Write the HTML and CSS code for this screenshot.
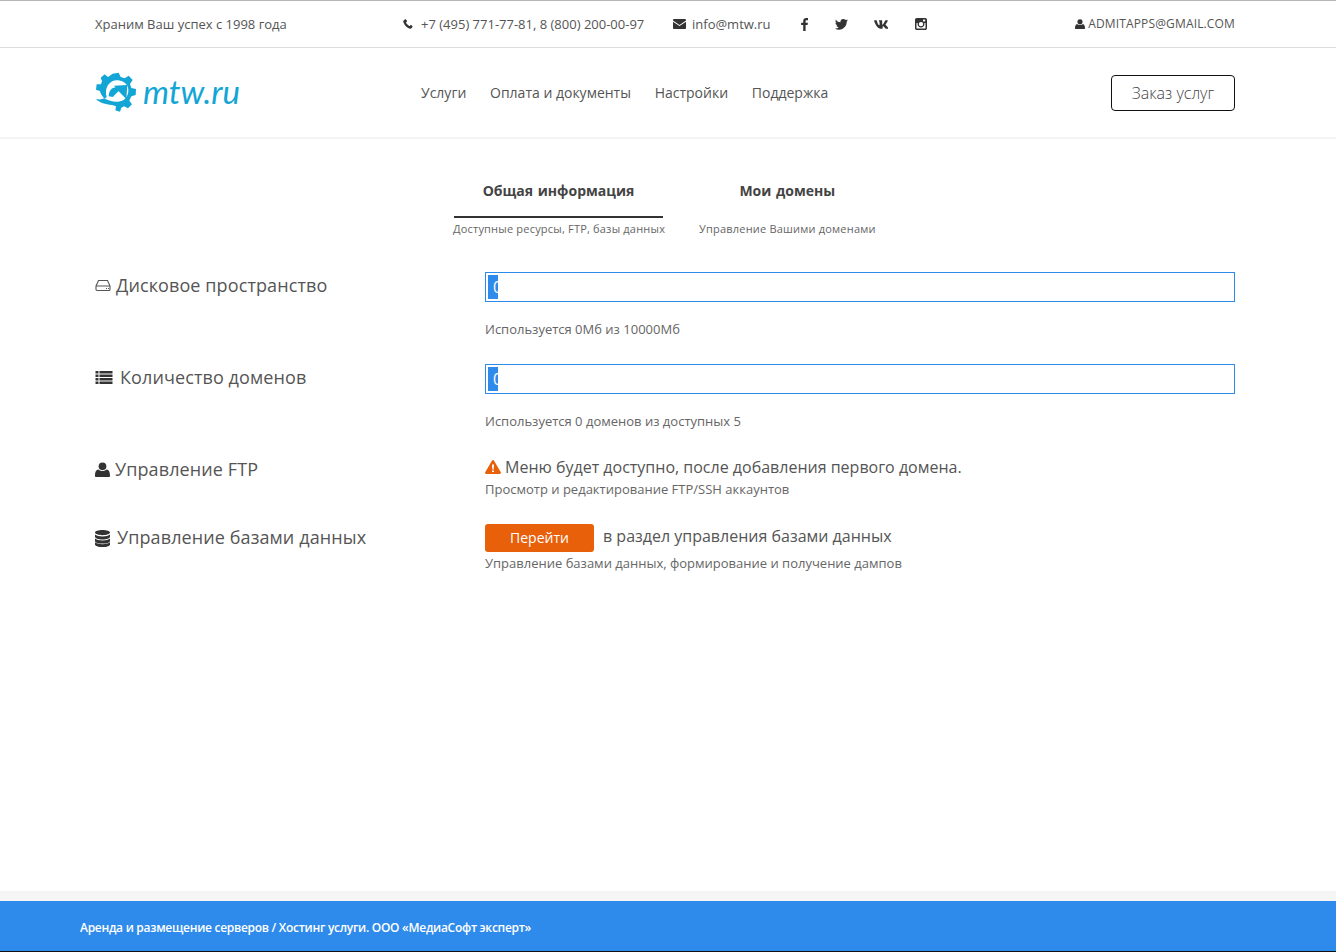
FILE: index.html
```html
<!DOCTYPE html>
<html lang="ru">
<head>
<meta charset="utf-8">
<title>mtw.ru</title>
<link rel="stylesheet" href="styles.css">
</head>
<body>
<svg class="defs" width="0" height="0" aria-hidden="true">
  <symbol id="i-user" viewBox="0 0 14 14"><circle cx="7" cy="4" r="3.6"/><path d="M0.6 13.900c-.5 0-.6-.5-.6-1 0-3 .8-5.600 3-5.900.9.8 2.400 1.500 4 1.500s3.100-.7 4-1.500c2.200.3 3 2.900 3 5.900 0 .5-.1 1-.6 1z"/></symbol>
</svg>

<div class="topbar">
  <div class="wrap topbar-row">
    <span class="slogan">Храним Ваш успех с 1998 года</span>
    <span class="contact phone">
      <svg class="ic-phone" viewBox="0 0 12 12"><path d="M2.700.4 1 1.600C.3 2.200.2 3.300.7 4.600c1.200 3 3.700 5.600 6.800 6.800 1.200.4 2.200.3 2.900-.5l1.100-1.500c.2-.3.1-.6-.1-.8L9.900 7.300c-.3-.2-.6-.2-.8 0l-.9 1c-.2.2-.5.2-.7.1C6 7.700 4.400 6.100 3.700 4.600c-.1-.3-.1-.5.1-.7l.9-.9c.2-.2.3-.5.1-.8L3.500.5C3.300.2 3 .2 2.700.4z"/></svg>
      +7 (495) 771-77-81, 8 (800) 200-00-97
    </span>
    <span class="contact mail">
      <svg class="ic-mail" viewBox="0 0 13 10"><path d="M.9 0h11.200c.5 0 .9.4.9.9 0 .5-.3.9-.7 1.200L6.500 5.900.7 2.100C.3 1.800 0 1.400 0 .9 0 .4.4 0 .9 0zM0 2.800l6.500 4.300L13 2.800V9c0 .6-.4 1-1 1H1c-.6 0-1-.4-1-1z"/></svg>
      info@mtw.ru
    </span>
    <span class="socials">
      <svg class="soc soc-f" viewBox="0 0 7 13"><path d="M4.600 13V7.100h2l.3-2.300H4.600V3.300c0-.7.2-1.100 1.100-1.100H7V.1C6.700.1 6 0 5.200 0 3.400 0 2.200 1.100 2.200 3.100v1.700H.1v2.300h2.100V13z"/></svg>
      <svg class="soc soc-t" viewBox="0 0 13 11"><path d="M13 1.300c-.5.2-1 .4-1.500.4.5-.3 1-.8 1.200-1.400-.5.3-1.100.5-1.700.7C9.500.4 8.800 0 8.100 0 6.600 0 5.400 1.200 5.400 2.700c0 .2 0 .4.1.6C3.300 3.200 1.300 2.100.9.500.7 1 .5 1.400.5 1.900c0 .9.5 1.700 1.200 2.200-.4 0-.9-.1-1.200-.3v0c0 1.300.9 2.400 2.100 2.600-.2.1-.5.1-.7.1h-.5c.3 1.100 1.300 1.800 2.500 1.900C2.900 9.100 1.700 9.500.6 9.500H0c1.200.8 2.600 1.200 4.100 1.200 4.900 0 7.600-4.100 7.600-7.600v-.4c.5-.4 1-.9 1.300-1.400z"/></svg>
      <svg class="soc soc-v" viewBox="0 0 16 9"><path d="M15.700.7c.1-.4 0-.7-.5-.7h-1.700c-.4 0-.6.2-.7.5-.5 1.200-1.500 3-2.300 3.900-.2.2-.4.3-.5.3-.1 0-.2-.1-.2-.4V.6c0-.4-.1-.6-.4-.6H6.700c-.2 0-.4.2-.4.4 0 .4.6.5.7 1.700v2.600c0 .6-.1.7-.3.7C6 5.400 4.900 3.700 4.200.7 4.100.2 3.900 0 3.500 0H1.800c-.5 0-.6.2-.6.5 0 .5.7 2.800 2.800 5.800C5.400 8.300 7.400 9 9.100 9c1 0 1.200-.2 1.200-.6V6.900c0-.5.1-.6.4-.6.2 0 .6.1 1.500 1 1 1 1.200 1.700 1.800 1.700h1.700c.5 0 .7-.3.6-.7-.2-.5-.7-1.200-1.500-2-.4-.5-1-1-1.200-1.300-.3-.3-.2-.5 0-.8 0 0 2-2.900 2.100-3.500z"/></svg>
      <svg class="soc soc-i" viewBox="0 0 12 12"><path fill-rule="evenodd" d="M1.800 0h8.400C11.200 0 12 .8 12 1.800v8.400c0 1-.8 1.800-1.800 1.800H1.800C.8 12 0 11.200 0 10.200V1.800C0 .8.8 0 1.800 0zM8.500 1.500c-.3 0-.5.2-.5.5v1.100c0 .3.2.5.5.5h1.200c.3 0 .5-.2.5-.5V2c0-.3-.2-.5-.5-.5zM1.500 5v4.900c0 .3.2.6.6.6h7.800c.4 0 .6-.3.6-.6V5H9.300c.1.3.2.7.2 1 0 1.900-1.600 3.400-3.500 3.400S2.500 7.900 2.500 6c0-.3.1-.7.2-1zM6 3.900a2.200 2.200 0 1 0 0 4.400 2.200 2.200 0 0 0 0-4.400z"/></svg>
    </span>
    <a class="account" href="#"><svg class="ic-user-sm"><use href="#i-user"/></svg>ADMITAPPS@GMAIL.COM</a>
  </div>
</div>

<header class="header">
  <div class="wrap header-row">
    <a class="logo" href="#">
      <svg class="logo-gear" viewBox="9 9 126 126">
        <path fill="#12a5d6" d="M62 14 80 11l6 13 12 4 12-8 12 13-8 12 4 12 14 3-1 18-13 4-6 13 8 11-12 12-12-6-8 4-4 12-14-4 2-12-12-4C40 106 24 102 12 90c10 2 18 2 24-2-6-8-12-16-12-22L12 62l2-16h13l3-10-4-10 12-10 10 8z"/>
        <path fill="#fff" d="M44 84C36 60 50 36 72 34c14-1 28 6 34 16 6 14 4 30-10 42-16 10-38 8-60-4 4 0 6-2 8-4z"/>
        <path fill="#12a5d6" d="M50 82c0-16 10-30 24-26l6 10-18 18z"/>
        <path fill="#12a5d6" d="M66 50l40-2-3 42-12-12-14-14z"/>
      </svg>
      <span class="logo-text">mtw.ru</span>
    </a>
    <nav class="nav">
      <a href="#">Услуги</a>
      <a href="#">Оплата и документы</a>
      <a href="#">Настройки</a>
      <a href="#">Поддержка</a>
    </nav>
    <a class="order" href="#">Заказ услуг</a>
  </div>
</header>

<main class="wrap main">
  <div class="tabs">
    <div class="tab active">
      <div class="tab-title">Общая информация</div>
      <div class="tab-sub">Доступные ресурсы, FTP, базы данных</div>
    </div>
    <div class="tab">
      <div class="tab-title">Мои домены</div>
      <div class="tab-sub">Управление Вашими доменами</div>
    </div>
  </div>

  <section class="row row-bar">
    <h3 class="label">
      <svg class="ic-hdd" viewBox="0 0 16 13"><path fill="none" stroke="currentColor" stroke-width="1.100" d="M1 7 3.500 1.500h9L15 7v3.500a1 1 0 0 1-1 1H2a1 1 0 0 1-1-1zM1 7h14"/><path d="M11 9h1v1h-1zM13 9h1v1h-1z"/></svg>
      Дисковое пространство
    </h3>
    <div class="value">
      <div class="bar"><div class="fill">0</div></div>
      <p class="note">Используется 0Мб из 10000Мб</p>
    </div>
  </section>

  <section class="row row-bar">
    <h3 class="label">
      <svg class="ic-list" viewBox="0 0 17 13"><path d="M0 0h3v2.500H0zM4 0h13v2.500H4zM0 3.500h3V6H0zM4 3.500h13V6H4zM0 7h3v2.500H0zM4 7h13v2.500H4zM0 10.500h3V13H0zM4 10.500h13V13H4z"/></svg>
      Количество доменов
    </h3>
    <div class="value">
      <div class="bar"><div class="fill">0</div></div>
      <p class="note">Используется 0 доменов из доступных 5</p>
    </div>
  </section>

  <section class="row row-ftp">
    <h3 class="label">
      <svg class="ic-user"><use href="#i-user"/></svg>
      Управление FTP
    </h3>
    <div class="value">
      <div class="lead">
        <svg class="ic-warn" viewBox="0 0 16 14"><path fill-rule="evenodd" d="M8 0c.5 0 .9.3 1.100.7l6.700 11.600c.4.8-.1 1.700-1 1.700H1.200c-.9 0-1.400-.9-1-1.700L6.900.7C7.100.3 7.500 0 8 0zM7 4.500l.3 5h1.400l.3-5zM7 10.500V12h2v-1.500z"/></svg>
        Меню будет доступно, после добавления первого домена.
      </div>
      <p class="hint">Просмотр и редактирование FTP/SSH аккаунтов</p>
    </div>
  </section>

  <section class="row row-db">
    <h3 class="label">
      <svg class="ic-db" viewBox="0 0 15 17"><path d="M7.500 0C11.600 0 15 1.100 15 2.600S11.600 5.200 7.500 5.200 0 4.100 0 2.600 3.400 0 7.500 0zM0 4.500c1.300 1.300 4.300 2 7.500 2s6.200-.7 7.500-2v2.300C15 8.300 11.600 9.500 7.500 9.500S0 8.300 0 6.800zM0 8.600c1.300 1.300 4.300 2 7.500 2s6.200-.7 7.500-2v2.300c0 1.500-3.400 2.700-7.500 2.700S0 12.400 0 10.900zM0 12.200c1.300 1.300 4.300 2 7.500 2s6.200-.7 7.500-2v2.200c0 1.500-3.400 2.600-7.500 2.600S0 15.900 0 14.400z"/></svg>
      Управление базами данных
    </h3>
    <div class="value">
      <div class="lead lead-btn"><a class="go" href="#">Перейти</a>в раздел управления базами данных</div>
      <p class="hint">Управление базами данных, формирование и получение дампов</p>
    </div>
  </section>
</main>

<footer class="footer">
  <div class="footer-gap"></div>
  <div class="footer-bar">Аренда и размещение серверов / Хостинг услуги. ООО «МедиаСофт эксперт»</div>
</footer>
</body>
</html>
```
FILE: styles.css
```css
* { box-sizing: border-box; }
html, body { margin: 0; padding: 0; }
body {
  min-height: 952px;
  display: flex;
  flex-direction: column;
  background: #fff;
  color: #555;
  font-family: "Open Sans", "Liberation Sans", sans-serif;
  font-size: 13px;
  line-height: 20px;
}
a { color: inherit; text-decoration: none; }
svg { fill: #333; flex: none; }
.defs { position: absolute; }
.wrap { width: 1140px; margin-left: 95px; }

.topbar { height: 48px; border-top: 1px solid #b5b5b5; border-bottom: 1px solid #dcdcdc; }
.topbar-row { display: flex; align-items: center; height: 46px; }
.slogan { width: 308px; }
.contact { display: flex; align-items: center; }
.phone { width: 270px; }
.mail { width: 128px; }
.ic-phone { width: 10px; height: 10px; margin-right: 8px; }
.ic-mail { width: 13px; height: 10px; margin-right: 6px; }
.socials { display: flex; align-items: center; height: 14px; }
.soc-f { width: 7px; height: 13px; margin-right: 27px; }
.soc-t { width: 13px; height: 11px; margin-right: 25px; }
.soc-v { width: 15px; height: 9px; margin-right: 27px; }
.soc-i { width: 12px; height: 12px; }
.account { margin-left: auto; display: flex; align-items: center; font-size: 12px; letter-spacing: .15px; margin-top: -1px; }
.ic-user-sm { width: 10px; height: 10px; margin-right: 3px; }

.header { height: 91px; border-bottom: 2px solid #f4f4f4; }
.header-row { display: flex; align-items: center; height: 89px; }
.logo { display: flex; align-items: center; width: 326px; height: 42px; }
.logo-gear { width: 42px; height: 42px; margin-top: 1px; }
.logo-text {
  margin-left: 6px;
  font-family: "Lato", sans-serif;
  font-style: italic;
  font-size: 33px;
  line-height: 42px;
  color: #12a5d6;
  margin-top: -3px;
}
.nav { display: flex; gap: 23.7px; font-size: 14px; }
.order {
  margin-left: auto;
  width: 124px;
  height: 36px;
  border: 1px solid #111;
  border-radius: 4px;
  text-align: center;
  font-size: 16px;
  font-weight: 300;
  line-height: 34px;
  color: #444;
}

.main { flex: 1; }
.tabs { display: flex; margin-left: 358px; padding-top: 41px; height: 133px; }
.tab { text-align: center; }
.tab:first-child { width: 212px; margin-right: 34px; }
.tab-title {
  height: 38px;
  font-size: 14px;
  font-weight: 700;
  line-height: 22px;
  letter-spacing: 0;
  word-spacing: 1px;
  color: #444;
  border-bottom: 2px solid transparent;
  white-space: nowrap;
}
.tab.active .tab-title { width: 209px; margin-left: 1px; border-bottom-color: #333; }
.tab-sub { margin-top: 1px; font-size: 11px; letter-spacing: .2px; line-height: 20px; white-space: nowrap; color: #666; }

.row { display: grid; grid-template-columns: 390px 750px; }
.row-bar { height: 92px; }
.row-ftp { height: 68px; }
.row-db { height: 60px; }
.label {
  margin: 0;
  display: flex;
  align-items: center;
  height: 26px;
  font-size: 18px;
  font-weight: 400;
  line-height: 26px;
  letter-spacing: .1px;
  color: #555;
}
.bar { height: 30px; border: 1px solid #2f8beb; padding: 2px; }
.fill { width: 10px; height: 24px; background: #2f8beb; color: #fff; font-size: 16px; line-height: 24px; overflow: hidden; padding-left: 5px; }
.note { margin: 17px 0 0; font-size: 13px; line-height: 20px; color: #666; }
.lead { display: flex; align-items: center; gap: 4px; height: 22px; font-size: 16px; line-height: 22px; color: #555; }
.hint { margin: 1px 0 0; font-size: 13px; line-height: 20px; color: #666; }
.lead-btn { align-items: flex-start; height: 28px; gap: 9px; line-height: 24px; }
.go {
  width: 109px;
  height: 28px;
  border-radius: 3px;
  background: #e8600a;
  color: #fff;
  font-size: 14px;
  line-height: 28px;
  text-align: center;
}
.ic-hdd { width: 16px; height: 13px; margin-right: 5px; color: #555; fill: #555; }
.ic-list { width: 18px; height: 13px; margin-right: 7px; }
.ic-user { width: 15px; height: 15px; margin-right: 5px; }
.ic-db { width: 15px; height: 17px; margin-top: 2px; margin-right: 7px; }
.ic-warn { width: 16px; height: 14px; fill: #e8600a; }

.footer-gap { height: 10px; background: #f5f5f5; }
.footer-bar {
  height: 51px;
  padding-left: 80px;
  background: #2f8beb;
  border-bottom: 1px solid #111;
  color: #fff;
  font-size: 12px;
  font-weight: 600;
  letter-spacing: -.28px;
  line-height: 53px;
}
```
